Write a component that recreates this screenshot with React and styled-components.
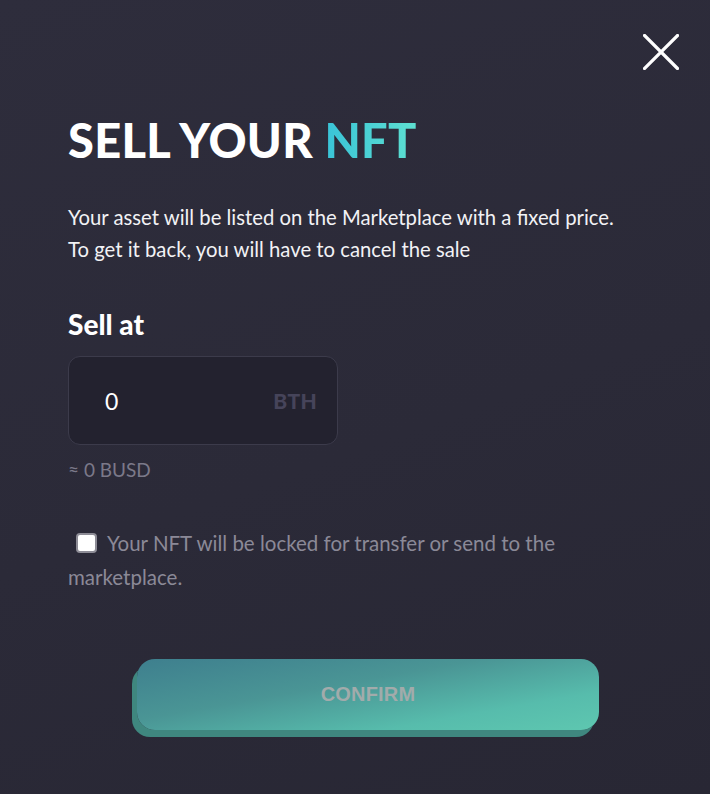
import React, { useState } from "react";
import styled, { createGlobalStyle } from "styled-components";

const GlobalStyle = createGlobalStyle`
  html, body {
    margin: 0;
    padding: 0;
    background: #2c2b39;
  }
  * {
    box-sizing: border-box;
  }
`;

const Modal = styled.div`
  width: 710px;
  height: 794px;
  background: linear-gradient(160deg, #2e2d3c 0%, #2b2a38 55%, #282734 100%);
  padding: 33px 30px 0 68px;
  font-family: Lato, "Open Sans", sans-serif;
  color: #fff;
  display: flex;
  flex-direction: column;
`;

const TopBar = styled.div`
  display: flex;
  justify-content: flex-end;
  height: 38px;
`;

const CloseButton = styled.button`
  width: 38px;
  height: 38px;
  padding: 0;
  border: none;
  background: transparent;
  cursor: pointer;
  display: flex;
  align-items: center;
  justify-content: center;
`;

const Title = styled.h1`
  margin: 46px 0 0;
  font-size: 47px;
  font-weight: 900;
  line-height: 1;
  letter-spacing: 0.3px;
`;

const Accent = styled.span`
  background: linear-gradient(90deg, #39c3d8 0%, #5ee0d0 100%);
  -webkit-background-clip: text;
  background-clip: text;
  color: transparent;
`;

const Description = styled.p`
  margin: 37px 0 0;
  font-size: 20.3px;
  line-height: 32px;
  color: #f2f2f5;
`;

const Label = styled.h2`
  margin: 45px 0 0;
  font-size: 28px;
  font-weight: 900;
  line-height: 1;
`;

const PriceBox = styled.label`
  margin-top: 18px;
  width: 270px;
  height: 89px;
  border-radius: 12px;
  background: #23222f;
  border: 1px solid #3c3b4b;
  display: flex;
  align-items: center;
  padding: 0 20px 0 36px;
`;

const PriceInput = styled.input`
  flex: 1;
  min-width: 0;
  background: transparent;
  border: none;
  outline: none;
  color: #fff;
  font-family: inherit;
  font-size: 23px;
  padding: 0;
`;

const Unit = styled.span`
  font-size: 21px;
  font-weight: 900;
  color: #46445a;
  letter-spacing: 0.3px;
`;

const Estimate = styled.div`
  margin-top: 13px;
  font-size: 19px;
  color: #7b7989;
`;

const Agreement = styled.label`
  margin-top: 45px;
  display: block;
  max-width: 540px;
  font-size: 20.5px;
  line-height: 34px;
  color: #8b8997;
  cursor: pointer;
`;

const Check = styled.input`
  appearance: none;
  width: 21px;
  height: 20px;
  margin: 0 10px 0 8px;
  vertical-align: -2px;
  border-radius: 4px;
  background: #fff;
  border: 2px solid #8d8c96;
  cursor: pointer;
`;

const Footer = styled.div`
  margin-top: 65px;
  display: flex;
  padding-left: 69px;
`;

const ConfirmButton = styled.button`
  width: 462px;
  height: 71px;
  border: none;
  border-radius: 18px;
  background: linear-gradient(170deg, #3e7f8e 0%, #4a9595 40%, #57bcac 75%, #5ec7b0 100%);
  box-shadow: -5px 7px 0 #3f877f;
  color: #a2abab;
  font-family: "Liberation Sans", Arial, sans-serif;
  font-weight: 700;
  font-size: 20px;
  letter-spacing: 0.2px;
  cursor: not-allowed;
`;

export default function App() {
  const [price, setPrice] = useState("0");
  const [locked, setLocked] = useState(false);

  return (
    <>
      <GlobalStyle />
      <Modal>
        <TopBar>
          <CloseButton aria-label="Close">
            <svg width="36" height="36" viewBox="0 0 36 36">
              <path d="M1.5 1.5 L34.5 34.5 M34.5 1.5 L1.5 34.5" stroke="#fff" strokeWidth="3.2" strokeLinecap="square" />
            </svg>
          </CloseButton>
        </TopBar>
        <Title>
          SELL YOUR <Accent>NFT</Accent>
        </Title>
        <Description>
          Your asset will be listed on the Marketplace with a fixed price.
          <br />
          To get it back, you will have to cancel the sale
        </Description>
        <Label>Sell at</Label>
        <PriceBox>
          <PriceInput value={price} onChange={(e) => setPrice(e.target.value)} />
          <Unit>BTH</Unit>
        </PriceBox>
        <Estimate>≈ {Number(price) || 0} BUSD</Estimate>
        <Agreement>
          <Check type="checkbox" checked={locked} onChange={(e) => setLocked(e.target.checked)} />
          Your NFT will be locked for transfer or send to the marketplace.
        </Agreement>
        <Footer>
          <ConfirmButton disabled={!locked}>CONFIRM</ConfirmButton>
        </Footer>
      </Modal>
    </>
  );
}
